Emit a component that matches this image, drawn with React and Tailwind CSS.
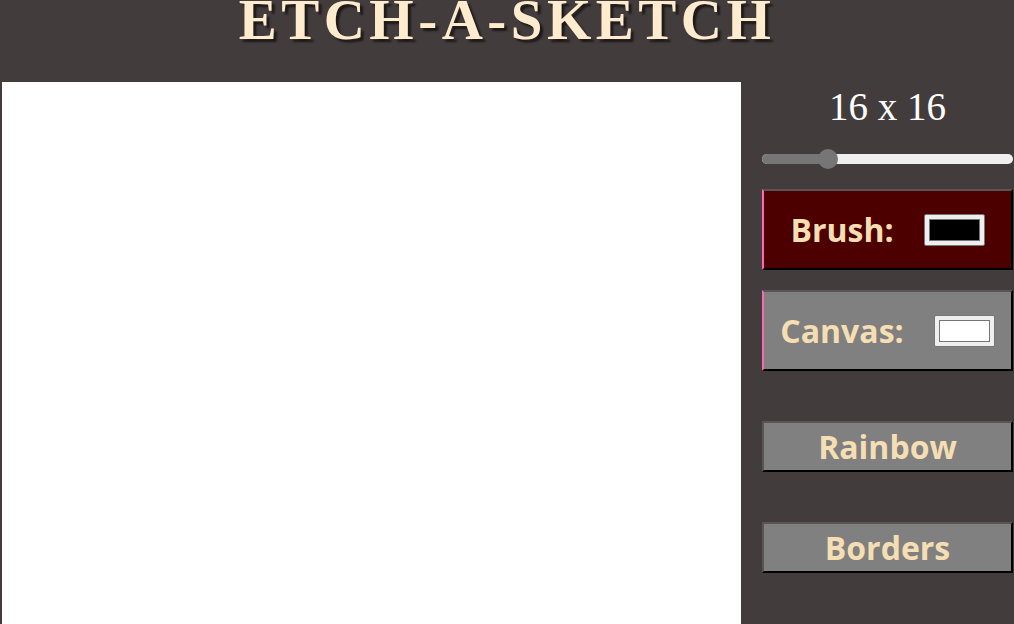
import { useState } from 'react';

const serif = { fontFamily: '"Liberation Serif", "Times New Roman", serif' };

const ColorSwatch = ({ color }) => (
  <div className="w-[61px] h-[32px] bg-[#efefef] border border-[#767676] rounded-[2px] p-[4px] flex">
    <div className="flex-1 border border-[#767676]" style={{ backgroundColor: color }} />
  </div>
);

const PanelButton = ({ children, className, accent }) => (
  <button
    type="button"
    className={`w-full border-2 border-t-[#5a5555] border-r-black border-b-black text-[#f5deb3] font-bold flex items-center justify-center ${
      accent ? 'border-l-[#ff69b4]' : 'border-l-[#5a5555]'
    } ${className}`}
    style={{ fontFamily: '"Open Sans", "Noto Sans", sans-serif' }}
  >
    {children}
  </button>
);

export default function App() {
  const [size] = useState(16);

  return (
    <div className="w-[1014px] h-[624px] bg-[#433c3c] overflow-hidden flex flex-col">
      <h1
        className="h-[82px] text-center text-[57px] leading-[40px] font-bold tracking-[4.5px] text-[#ffebcd]"
        style={{ ...serif, textShadow: '3px 3px 2px #1f1a1a' }}
      >
        ETCH-A-SKETCH
      </h1>
      <div className="flex flex-1">
        <div className="ml-[2px] w-[739px] h-full bg-white" />
        <div className="ml-[21px] w-[251px] flex flex-col">
          <div className="text-white text-[39px] leading-[48px] text-center mt-[1px]" style={serif}>
            {size} x {size}
          </div>
          <div className="relative h-[19px] mt-[18px]">
            <div className="absolute left-0 right-0 top-[5px] h-[10px] rounded-full bg-[#efefef]" />
            <div className="absolute left-0 top-[5px] h-[10px] w-[70px] rounded-full bg-[#767676]" />
            <div className="absolute left-[56px] top-0 w-[20px] h-[20px] rounded-full bg-[#767676]" />
          </div>
          <PanelButton accent className="mt-[21px] h-[81px] bg-[#4d0000] text-[32px] gap-[30px]">
            <span>Brush:</span>
            <ColorSwatch color="#000000" />
          </PanelButton>
          <PanelButton accent className="mt-[20px] h-[81px] bg-[#808080] text-[32px] gap-[30px]">
            <span>Canvas:</span>
            <ColorSwatch color="#ffffff" />
          </PanelButton>
          <PanelButton className="mt-[50px] h-[51px] bg-[#808080] text-[32px]">
            Rainbow
          </PanelButton>
          <PanelButton className="mt-[50px] h-[51px] bg-[#808080] text-[32px]">
            Borders
          </PanelButton>
        </div>
      </div>
    </div>
  );
}
